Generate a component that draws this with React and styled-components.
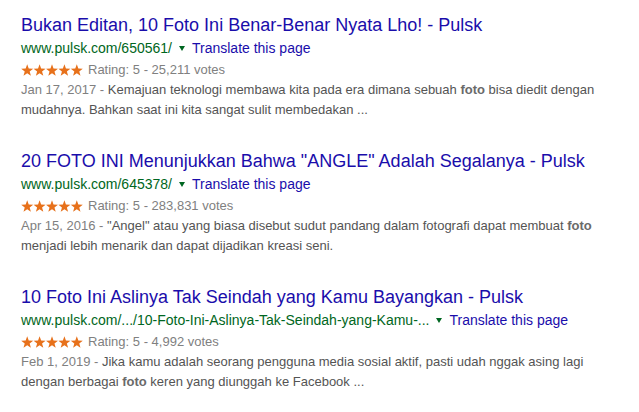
import React from 'react';
import styled, { createGlobalStyle } from 'styled-components';

const GlobalStyle = createGlobalStyle`
  html, body {
    margin: 0;
    padding: 0;
    background: #fff;
  }

  body {
    font-family: 'Liberation Sans', Arial, sans-serif;
  }
`;

const results = [
  {
    id: 1,
    title: 'Bukan Editan, 10 Foto Ini Benar-Benar Nyata Lho! - Pulsk',
    url: 'www.pulsk.com/650561/',
    votes: '25,211',
    date: 'Jan 17, 2017',
    snippet: [
      'Kemajuan teknologi membawa kita pada era dimana sebuah ',
      { bold: 'foto' },
      ' bisa diedit dengan mudahnya. Bahkan saat ini kita sangat sulit membedakan ...',
    ],
  },
  {
    id: 2,
    title: '20 FOTO INI Menunjukkan Bahwa "ANGLE" Adalah Segalanya - Pulsk',
    url: 'www.pulsk.com/645378/',
    votes: '283,831',
    date: 'Apr 15, 2016',
    snippet: [
      '"Angel" atau yang biasa disebut sudut pandang dalam fotografi dapat membuat ',
      { bold: 'foto' },
      ' menjadi lebih menarik dan dapat dijadikan kreasi seni.',
    ],
  },
  {
    id: 3,
    title: '10 Foto Ini Aslinya Tak Seindah yang Kamu Bayangkan - Pulsk',
    url: 'www.pulsk.com/.../10-Foto-Ini-Aslinya-Tak-Seindah-yang-Kamu-...',
    votes: '4,992',
    date: 'Feb 1, 2019',
    snippet: [
      'Jika kamu adalah seorang pengguna media sosial aktif, pasti udah nggak asing lagi dengan berbagai ',
      { bold: 'foto' },
      ' keren yang diunggah ke Facebook ...',
    ],
  },
];

const Page = styled.div`
  padding: 14px 0 0 21px;
  display: flex;
  flex-direction: column;
  gap: 30px;
`;

const Result = styled.div`
  width: 600px;
`;

const Title = styled.a`
  display: block;
  font-size: 18px;
  line-height: 23px;
  color: #1a0dab;
  text-decoration: none;
  white-space: nowrap;
`;

const UrlRow = styled.div`
  display: flex;
  align-items: center;
  height: 22px;
  font-size: 14px;
  white-space: nowrap;
`;

const Cite = styled.cite`
  font-style: normal;
  color: #006621;
`;

const Arrow = styled.span`
  display: inline-block;
  width: 0;
  height: 0;
  margin: 1px 7px 0 7px;
  border-left: 3.5px solid transparent;
  border-right: 3.5px solid transparent;
  border-top: 5px solid #006621;
`;

const Translate = styled.a`
  color: #1a0dab;
  text-decoration: none;
`;

const RatingRow = styled.div`
  display: flex;
  align-items: center;
  gap: 5px;
  height: 21px;
  font-size: 13px;
  color: #808080;
`;

const Snippet = styled.div`
  font-size: 13px;
  line-height: 20px;
  color: #545454;
  max-width: 590px;

  b {
    color: #6a6a6a;
  }
`;

const DateText = styled.span`
  color: #808080;
`;

const starPoints = (cx) => {
  const pts = [];
  for (let i = 0; i < 10; i++) {
    const r = i % 2 === 0 ? 6.3 : 2.6;
    const a = (Math.PI / 5) * i - Math.PI / 2;
    pts.push(`${(cx + r * Math.cos(a)).toFixed(2)},${(6.6 + r * Math.sin(a)).toFixed(2)}`);
  }
  return pts.join(' ');
};

const Stars = () => (
  <svg width="62" height="12" viewBox="0 0 62 12">
    {[0, 1, 2, 3, 4].map((i) => (
      <polygon key={i} points={starPoints(6.2 + i * 12.4)} fill="#e7711b" />
    ))}
  </svg>
);

const App = () => (
  <>
    <GlobalStyle />
    <Page>
      {results.map(({ id, title, url, votes, date, snippet }) => (
        <Result key={id}>
          <Title href="#">{title}</Title>
          <UrlRow>
            <Cite>{url}</Cite>
            <Arrow />
            <Translate href="#">Translate this page</Translate>
          </UrlRow>
          <RatingRow>
            <Stars />
            <span>Rating: 5 - {votes} votes</span>
          </RatingRow>
          <Snippet>
            <DateText>{date} - </DateText>
            {snippet.map((part, i) =>
              typeof part === 'string' ? part : <b key={i}>{part.bold}</b>
            )}
          </Snippet>
        </Result>
      ))}
    </Page>
  </>
);

export default App;
